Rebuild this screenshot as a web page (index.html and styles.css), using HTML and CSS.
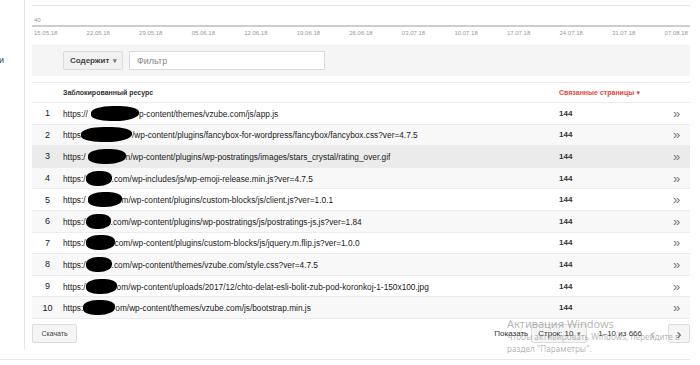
FILE: index.html
```html
<!DOCTYPE html>
<html lang="ru">
<head>
  <meta charset="UTF-8">
  <meta name="viewport" content="width=device-width, initial-scale=1.0">
  <title>Заблокированные ресурсы</title>
  <link rel="stylesheet" href="styles.css">
</head>
<body>
  <div class="page">
    <aside class="sidebar"><span class="side-cut">и</span></aside>

    <main class="content">
      <section class="chart">
        <div class="plot"><span class="y-label">40</span></div>
        <div class="x-labels">
          <span>15.05.18</span><span>22.05.18</span><span>29.05.18</span><span>05.06.18</span>
          <span>12.06.18</span><span>19.06.18</span><span>26.06.18</span><span>03.07.18</span>
          <span>10.07.18</span><span>17.07.18</span><span>24.07.18</span><span>31.07.18</span>
          <span>07.08.18</span>
        </div>
      </section>

      <div class="filter-bar">
        <div class="select">Содержит <span class="caret">▾</span></div>
        <div class="filter-input">Фильтр</div>
      </div>

      <div class="table">
        <div class="row head">
          <span></span>
          <span class="col-res">Заблокированный ресурс</span>
          <span class="col-sort">Связанные страницы<span class="sort-arrow">▼</span></span>
          <span></span>
        </div>

        <div class="row">
          <span class="num">1</span>
          <span class="url">https://<i class="blot" style="width:48px;margin-left:3px"></i>p-content/themes/vzube.com/js/app.js</span>
          <span class="count">144</span><span class="go">»</span>
        </div>
        <div class="row">
          <span class="num">2</span>
          <span class="url">https<i class="blot" style="width:51px"></i>/wp-content/plugins/fancybox-for-wordpress/fancybox/fancybox.css?ver=4.7.5</span>
          <span class="count">144</span><span class="go">»</span>
        </div>
        <div class="row hover">
          <span class="num">3</span>
          <span class="url">https:/<i class="blot" style="width:38px;margin-left:2px"></i>n/wp-content/plugins/wp-postratings/images/stars_crystal/rating_over.gif</span>
          <span class="count">144</span><span class="go">»</span>
        </div>
        <div class="row">
          <span class="num">4</span>
          <span class="url">https:/<i class="blot" style="width:26px"></i>.com/wp-includes/js/wp-emoji-release.min.js?ver=4.7.5</span>
          <span class="count">144</span><span class="go">»</span>
        </div>
        <div class="row">
          <span class="num">5</span>
          <span class="url">https:/<i class="blot" style="width:34px;margin-left:2px"></i>m/wp-content/plugins/custom-blocks/js/client.js?ver=1.0.1</span>
          <span class="count">144</span><span class="go">»</span>
        </div>
        <div class="row">
          <span class="num">6</span>
          <span class="url">https:/<i class="blot" style="width:25px"></i>.com/wp-content/plugins/wp-postratings/js/postratings-js.js?ver=1.84</span>
          <span class="count">144</span><span class="go">»</span>
        </div>
        <div class="row">
          <span class="num">7</span>
          <span class="url">https:/<i class="blot" style="width:29px"></i>com/wp-content/plugins/custom-blocks/js/jquery.m.flip.js?ver=1.0.0</span>
          <span class="count">144</span><span class="go">»</span>
        </div>
        <div class="row">
          <span class="num">8</span>
          <span class="url">https:/<i class="blot" style="width:26px"></i>.com/wp-content/themes/vzube.com/style.css?ver=4.7.5</span>
          <span class="count">144</span><span class="go">»</span>
        </div>
        <div class="row">
          <span class="num">9</span>
          <span class="url">https:/<i class="blot" style="width:31px"></i>om/wp-content/uploads/2017/12/chto-delat-esli-bolit-zub-pod-koronkoj-1-150x100.jpg</span>
          <span class="count">144</span><span class="go">»</span>
        </div>
        <div class="row">
          <span class="num">10</span>
          <span class="url">https:<i class="blot" style="width:32px"></i>om/wp-content/themes/vzube.com/js/bootstrap.min.js</span>
          <span class="count">144</span><span class="go">»</span>
        </div>
      </div>

      <div class="footer">
        <button class="btn">Скачать</button>
        <div class="pager">
          <span>Показать</span>
          <div class="select rows">Строк: 10 <span class="caret">▾</span></div>
          <span class="range">1–10 из 666</span>
          <span class="prev">‹</span>
          <button class="next">›</button>
        </div>
      </div>
    </main>
  </div>
  <div class="bottom-line"></div>

  <div class="watermark">
    <div class="wm-title">Активация Windows</div>
    <div class="wm-text">Чтобы активировать Windows, перейдите в<br>раздел "Параметры".</div>
  </div>
</body>
</html>
```

FILE: styles.css
```css
* {
  margin: 0;
  padding: 0;
  box-sizing: border-box;
}
body {
  width: 700px;
  height: 365px;
  overflow: hidden;
  background: #fff;
  color: #222;
  font-family: 'Liberation Sans', Arial, sans-serif;
  position: relative;
}
.page {
  display: flex;
  height: 349px;
}
.sidebar {
  width: 25px;
  border-right: 1px solid #e4e4e4;
}
.side-cut {
  display: block;
  margin-top: 55px;
  margin-left: -1px;
  font-size: 9px;
  color: #444;
}
.content {
  width: 665px;
  padding-left: 7px;
  display: flex;
  flex-direction: column;
}

/* chart */
.chart {
  height: 45px;
  padding-top: 5px;
}
.plot {
  height: 22px;
  border-top: 1px solid #e8e8e8;
  border-bottom: 2px solid #cdcdcd;
  padding: 2px 0 0 2px;
}
.y-label {
  font-size: 6px;
  color: #999;
}
.x-labels {
  display: flex;
  justify-content: space-between;
  padding: 3px 2px 0 2px;
  font-size: 6px;
  color: #999;
}

/* filter */
.filter-bar {
  height: 31px;
  background: #f5f5f5;
  display: flex;
  align-items: center;
  gap: 6px;
  padding-left: 31px;
}
.select {
  height: 19px;
  width: 60px;
  background: #f1f1f1;
  border: 1px solid #dcdcdc;
  border-radius: 2px;
  font-size: 8px;
  font-weight: bold;
  color: #444;
  display: flex;
  align-items: center;
  padding-left: 6px;
}
.caret {
  margin-left: auto;
  margin-right: 5px;
  color: #777;
  font-size: 7px;
}
.filter-input {
  height: 19px;
  width: 196px;
  background: #fff;
  border: 1px solid #d9d9d9;
  font-size: 9px;
  color: #888;
  display: flex;
  align-items: center;
  padding-left: 7px;
}

/* table */
.table {
  margin-top: 6px;
}
.row {
  display: grid;
  grid-template-columns: 31px 496px 1fr 17px;
  align-items: center;
  height: 21.6px;
  border-top: 1px solid #ececec;
  font-size: 8.3px;
}
.row:nth-child(odd) {
  background: #f8f8f8;
}
.row.hover {
  background: #ebebeb;
}
.row.head {
  height: 20px;
  background: #fff;
  font-size: 7px;
  font-weight: bold;
}
.col-res {
  color: #333;
}
.col-sort {
  color: #dd4b39;
}
.sort-arrow {
  font-size: 6px;
  margin-left: 1px;
}
.num {
  text-align: center;
  font-size: 9px;
  color: #222;
}
.url {
  white-space: nowrap;
  color: #1a1a1a;
}
.blot {
  display: inline-block;
  height: 15px;
  background: #000;
  border-radius: 45% 40% 50% 40%;
  vertical-align: -4px;
}
.count {
  font-weight: bold;
  font-size: 8px;
  color: #333;
}
.go {
  color: #777;
  font-size: 13px;
  line-height: 1;
}

/* footer */
.footer {
  display: flex;
  align-items: center;
  justify-content: space-between;
  height: 31px;
  border-top: 1px solid #ececec;
}
.btn {
  height: 19px;
  width: 45px;
  background: #f5f5f5;
  border: 1px solid #dcdcdc;
  border-radius: 2px;
  font-family: inherit;
  font-size: 7px;
  color: #444;
}
.pager {
  display: flex;
  align-items: center;
  font-size: 8px;
  color: #333;
}
.pager .rows {
  width: 56px;
  margin-left: 3px;
  font-weight: normal;
  color: #333;
  background: #f5f5f5;
  padding-left: 6px;
}
.range {
  margin-left: 11px;
}
.prev {
  margin-left: 8px;
  font-size: 15px;
  color: #bbb;
  line-height: 1;
}
.next {
  margin-left: 13px;
  width: 22px;
  height: 19px;
  background: #f5f5f5;
  border: 1px solid #dcdcdc;
  border-radius: 2px;
  font-size: 15px;
  color: #555;
  line-height: 1;
}
.bottom-line {
  margin-top: 10px;
  width: 690px;
  border-top: 1px solid #e8e8e8;
}

/* activation overlay */
.watermark {
  position: absolute;
  left: 507px;
  top: 316px;
  font-family: 'Noto Sans', 'Open Sans', sans-serif;
  color: rgba(120, 120, 120, 0.55);
  white-space: nowrap;
}
.wm-title {
  font-size: 11px;
  line-height: 15px;
}
.wm-text {
  font-size: 8.2px;
  line-height: 12px;
}
```
